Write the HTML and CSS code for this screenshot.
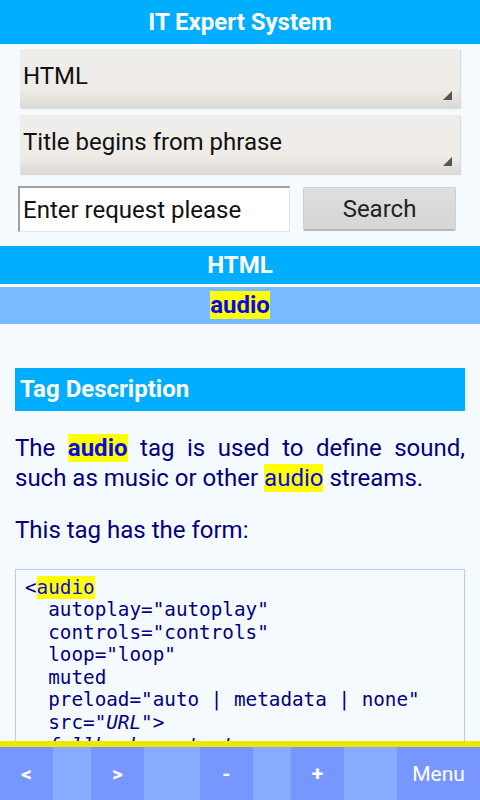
FILE: index.html
```html
<!DOCTYPE html>
<html lang="en">
<head>
  <meta charset="UTF-8" />
  <meta name="viewport" content="width=device-width,initial-scale=1.0" />
  <title>IT Expert System</title>
  <link rel="stylesheet" href="styles.css">
</head>
<body>
  <div class="header">IT Expert System</div>

  <div class="filters">
    <div class="select">HTML<span class="arrow"></span></div>
    <div class="select">Title begins from phrase<span class="arrow"></span></div>
    <div class="search-row">
      <input class="search-input" type="text" value="Enter request please" />
      <button class="search-btn">Search</button>
    </div>
  </div>

  <div class="section-bar">HTML</div>
  <div class="topic-bar"><span class="hl">audio</span></div>

  <div class="content">
    <div class="block-title">Tag Description</div>
    <p>The <b class="hl">audio</b> tag is used to define sound, such as music or other <span class="hl">audio</span> streams.</p>
    <p>This tag has the form:</p>
    <pre class="code">&lt;<span class="hl">audio</span>
  autoplay="autoplay"
  controls="controls"
  loop="loop"
  muted
  preload="auto | metadata | none"
  src="<i>URL</i>"&gt;
  <i>fallback content</i>
&lt;/audio&gt;</pre>
  </div>

  <div class="footer">
    <div class="nav dark bold">&lt;</div>
    <div class="nav light"></div>
    <div class="nav dark bold">&gt;</div>
    <div class="nav light"></div>
    <div class="nav dark bold">-</div>
    <div class="nav light"></div>
    <div class="nav dark bold">+</div>
    <div class="nav light"></div>
    <div class="nav dark">Menu</div>
  </div>
</body>
</html>
```

FILE: styles.css
```css
body {
  margin: 0;
  background-color: #f5faff;
  font-family: Roboto, "Noto Sans", sans-serif;
  font-size: 24px;
  color: #000080;
}
.header {
  height: 44px;
  line-height: 44px;
  background-color: #00aeff;
  color: white;
  font-weight: bold;
  text-align: center;
}
.filters {
  padding: 5px 20px 0;
}
.select {
  position: relative;
  height: 59px;
  line-height: 55px;
  padding-left: 3px;
  margin-bottom: 7px;
  color: #111;
  background: linear-gradient(#f0eeea 0%, #efece8 70%, #dcd9d5 100%);
  box-shadow: 1px 1px 1px rgba(0,0,0,0.12);
  box-sizing: border-box;
}
.select .arrow {
  position: absolute;
  right: 8px;
  bottom: 8px;
  width: 0;
  height: 0;
  border-left: 9px solid transparent;
  border-bottom: 9px solid #555;
}
.search-row {
  display: flex;
  align-items: flex-start;
  gap: 13px;
  margin: 12px 0 0 -2px;
}
.search-input {
  width: 272px;
  height: 46px;
  box-sizing: border-box;
  margin: 0;
  padding: 0 0 0 3px;
  border-style: solid;
  border-width: 2px 1px 1px 2px;
  border-color: #a0a0a0 #e4e4e4 #e4e4e4 #a0a0a0;
  background: white;
  font-family: Roboto, sans-serif;
  font-size: 24px;
  color: #111;
}
.search-btn {
  width: 153px;
  height: 44px;
  margin-top: 1px;
  border: 1px solid #cfcfcf;
  border-bottom: 2px solid #b8b8b8;
  border-radius: 2px;
  background: linear-gradient(#dedede, #d6d6d6);
  font-family: Roboto, sans-serif;
  font-size: 24px;
  color: #222;
}
.section-bar {
  margin-top: 14px;
  height: 38px;
  line-height: 38px;
  background-color: #00aeff;
  border-bottom: 3px solid white;
  color: white;
  font-weight: bold;
  text-align: center;
}
.topic-bar {
  height: 37px;
  line-height: 37px;
  background-color: #78bbff;
  text-align: center;
  font-weight: bold;
  color: #0a0ae6;
}
.hl {
  background-color: #ffff00;
  color: #0a0ae6;
}
.content {
  padding: 44px 15px 80px;
}
.block-title {
  height: 43px;
  line-height: 43px;
  padding-left: 5px;
  background-color: #00aeff;
  color: white;
  font-weight: bold;
}
.content p {
  margin: 23px 0 22px;
  text-align: justify;
  line-height: 29.5px;
}
.code {
  margin: 23px 0 0;
  padding: 7px 9px;
  border: 1px solid #b8ccf8;
  font-family: "DejaVu Sans Mono", monospace;
  font-size: 19.3px;
  line-height: 22.6px;
  color: #000080;
}
.footer {
  position: fixed;
  left: 0;
  right: 0;
  bottom: 0;
  display: grid;
  grid-template-columns: 53px 38px 53px 56px 53px 38px 53px 53px 83px;
  height: 53px;
  border-top: 6px solid #eee800;
}
.nav {
  display: flex;
  align-items: center;
  justify-content: center;
  color: white;
  font-size: 21px;
}
.nav.bold { font-weight: bold; }
.nav.dark { background-color: #7896ff; }
.nav.light { background-color: #88aaff; }
```
